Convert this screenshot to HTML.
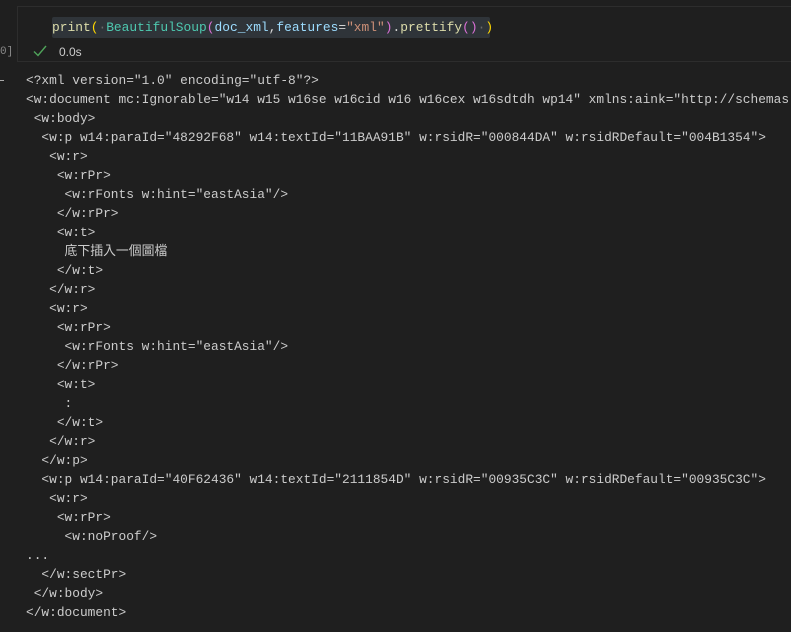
<!DOCTYPE html>
<html><head><meta charset="utf-8"><style>
html,body{margin:0;padding:0;background:#1f1f1f;width:791px;height:632px;overflow:hidden}
.cell{position:absolute;left:17px;top:6px;width:780px;height:56px;border:1px solid #2d2d2d;box-sizing:border-box;background:#1f1f1f}
.code{position:absolute;left:52px;top:17px;height:21px;width:438px;background:#2f3439;border-radius:2px;font:12.9px/21px "Liberation Mono",monospace;color:#d4d4d4;white-space:pre}
.exec{position:absolute;left:0;top:44px;font:11px/16px "Liberation Mono",monospace;color:#8a8a8a}
.chk{position:absolute;left:33px;top:45px}
.time{position:absolute;left:59px;top:45px;color:#cccccc;font:12px/14px "Liberation Sans",sans-serif}
.dash{position:absolute;left:0;top:80px;width:4px;height:1px;background:#aaa}
.out{position:absolute;left:26px;top:71px;font:12.85px/19px "Liberation Mono","Noto Sans CJK TC",monospace;color:#cccccc;white-space:pre}
.f{color:#dcdcaa}.p{color:#ffd700}.c{color:#4ec9b0}.v{color:#9cdcfe}.s{color:#ce9178}.q{color:#da70d6}.d{color:#6a6a6a}
</style></head><body>
<div class="cell"></div>
<div class="code"><span class="f">print</span><span class="p">(</span><span class="d">·</span><span class="c">BeautifulSoup</span><span class="q">(</span><span class="v">doc_xml</span>,<span class="v">features</span>=<span class="s">"xml"</span><span class="q">)</span>.<span class="f">prettify</span><span class="q">()</span><span class="d">·</span><span class="p">)</span></div>
<div class="exec">0]</div>
<svg class="chk" width="14" height="12" viewBox="0 0 14 12"><path d="M1 6.5 L5 10.5 L13 1" fill="none" stroke="#4fa35a" stroke-width="1.4"/></svg>
<div class="time">0.0s</div>
<div class="dash"></div>
<div class="out">&lt;?xml version="1.0" encoding="utf-8"?&gt;
&lt;w:document mc:Ignorable="w14 w15 w16se w16cid w16 w16cex w16sdtdh wp14" xmlns:aink="http://schemas.
 &lt;w:body&gt;
  &lt;w:p w14:paraId="48292F68" w14:textId="11BAA91B" w:rsidR="000844DA" w:rsidRDefault="004B1354"&gt;
   &lt;w:r&gt;
    &lt;w:rPr&gt;
     &lt;w:rFonts w:hint="eastAsia"/&gt;
    &lt;/w:rPr&gt;
    &lt;w:t&gt;
     底下插入一個圖檔
    &lt;/w:t&gt;
   &lt;/w:r&gt;
   &lt;w:r&gt;
    &lt;w:rPr&gt;
     &lt;w:rFonts w:hint="eastAsia"/&gt;
    &lt;/w:rPr&gt;
    &lt;w:t&gt;
     :
    &lt;/w:t&gt;
   &lt;/w:r&gt;
  &lt;/w:p&gt;
  &lt;w:p w14:paraId="40F62436" w14:textId="2111854D" w:rsidR="00935C3C" w:rsidRDefault="00935C3C"&gt;
   &lt;w:r&gt;
    &lt;w:rPr&gt;
     &lt;w:noProof/&gt;
...
  &lt;/w:sectPr&gt;
 &lt;/w:body&gt;
&lt;/w:document&gt;</div>
</body></html>
